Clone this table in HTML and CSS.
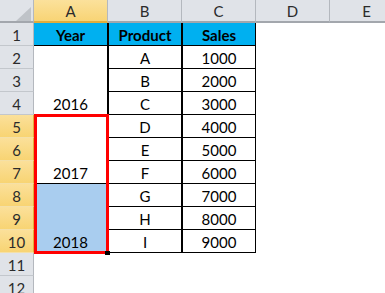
FILE: index.html
```html
<!DOCTYPE html>
<html>
<head>
<meta charset="utf-8">
<link rel="stylesheet" href="styles.css">
</head>
<body>
<div class="sheet">
  <div class="hdr corner"><svg class="tri" width="34" height="23" viewBox="0 0 34 23"><polygon points="31,7 31,21 16,21" fill="#bfc3c8"/></svg></div>
  <div class="hdr col sel">A</div>
  <div class="hdr col">B</div>
  <div class="hdr col">C</div>
  <div class="hdr col">D</div>
  <div class="hdr col">E</div>

  <div class="hdr row">1</div>
  <div class="cell title ca">Year</div>
  <div class="cell title cb">Product</div>
  <div class="cell title cc">Sales</div>
  <div class="blank"></div><div class="blank"></div>

  <div class="hdr row">2</div>
  <div class="cell ca merge m1">2016</div>
  <div class="cell cb">A</div><div class="cell cc">1000</div>
  <div class="blank"></div><div class="blank"></div>

  <div class="hdr row">3</div>
  <div class="cell cb">B</div><div class="cell cc">2000</div>
  <div class="blank"></div><div class="blank"></div>

  <div class="hdr row">4</div>
  <div class="cell cb">C</div><div class="cell cc">3000</div>
  <div class="blank"></div><div class="blank"></div>

  <div class="hdr row hl">5</div>
  <div class="cell ca merge m2">2017</div>
  <div class="cell cb">D</div><div class="cell cc">4000</div>
  <div class="blank"></div><div class="blank"></div>

  <div class="hdr row hl">6</div>
  <div class="cell cb">E</div><div class="cell cc">5000</div>
  <div class="blank"></div><div class="blank"></div>

  <div class="hdr row hl">7</div>
  <div class="cell cb">F</div><div class="cell cc">6000</div>
  <div class="blank"></div><div class="blank"></div>

  <div class="hdr row hl">8</div>
  <div class="cell ca merge m3 selfill">2018</div>
  <div class="cell cb">G</div><div class="cell cc">7000</div>
  <div class="blank"></div><div class="blank"></div>

  <div class="hdr row hl">9</div>
  <div class="cell cb">H</div><div class="cell cc">8000</div>
  <div class="blank"></div><div class="blank"></div>

  <div class="hdr row hl">10</div>
  <div class="cell cb">I</div><div class="cell cc">9000</div>
  <div class="blank"></div><div class="blank"></div>

  <div class="hdr row">11</div>
  <div class="blank"></div><div class="blank"></div><div class="blank"></div><div class="blank"></div><div class="blank"></div>

  <div class="hdr row">12</div>
  <div class="blank"></div><div class="blank"></div><div class="blank"></div><div class="blank"></div><div class="blank"></div>

  <div class="selection"></div>
  <div class="handle"></div>
</div>
</body>
</html>
```
FILE: styles.css
```css
html, body {
  margin: 0;
  padding: 0;
  background: #fff;
  overflow: hidden;
}
.sheet {
  position: relative;
  display: grid;
  grid-template-columns: 34px 74px 74px 74px 74px 74px;
  grid-template-rows: repeat(13, 23px);
  width: 404px;
  font-family: Lato, "Open Sans", sans-serif;
  font-size: 15px;
  color: #000;
}
.hdr {
  box-sizing: border-box;
  background: #e0e3e8;
  color: #2b2b2b;
  display: flex;
  align-items: center;
  justify-content: center;
  padding-top: 1px;
}
.corner {
  border-right: 1px solid #b4b8be;
  border-bottom: 2px solid #a3a7ad;
  padding: 0;
  position: relative;
}
.tri {
  position: absolute;
  left: 0;
  top: 0;
}
.col {
  border-right: 1px solid #b4b8be;
  border-bottom: 2px solid #a3a7ad;
}
.col.sel {
  background: linear-gradient(#fbe19b, #f8d475);
  border-bottom-color: #e2ad3c;
}
.row {
  border-right: 1px solid #b4b8be;
  border-bottom: 1px solid #c3c7cc;
}
.row.hl {
  background: linear-gradient(#fbe09a, #f8d473);
  border-bottom-color: #f4e0a8;
  border-right-color: #e2ad3c;
}
.cell {
  box-sizing: border-box;
  display: flex;
  align-items: center;
  justify-content: center;
  padding-top: 2px;
  border-bottom: 1px solid #000;
  background: #fff;
}
.cell.ca { border-right: 1px solid #000; }
.cell.cb { border-left: 1px solid #000; border-right: 1px solid #000; }
.cell.cc { border-left: 1px solid #000; border-right: 1px solid #000; }
.cell.title {
  background: #00b0f0;
  font-weight: bold;
}
.merge {
  grid-row: span 3;
  align-items: flex-end;
  padding-bottom: 1px;
}
.selfill {
  background: #a9cdef;
}
.blank {
  background: #fff;
}
.selection {
  position: absolute;
  left: 34px;
  top: 114px;
  width: 75px;
  height: 140px;
  box-sizing: border-box;
  border: 3px solid #ff0000;
}
.handle {
  position: absolute;
  left: 105px;
  top: 251px;
  width: 5px;
  height: 4px;
  background: #000;
}
```
